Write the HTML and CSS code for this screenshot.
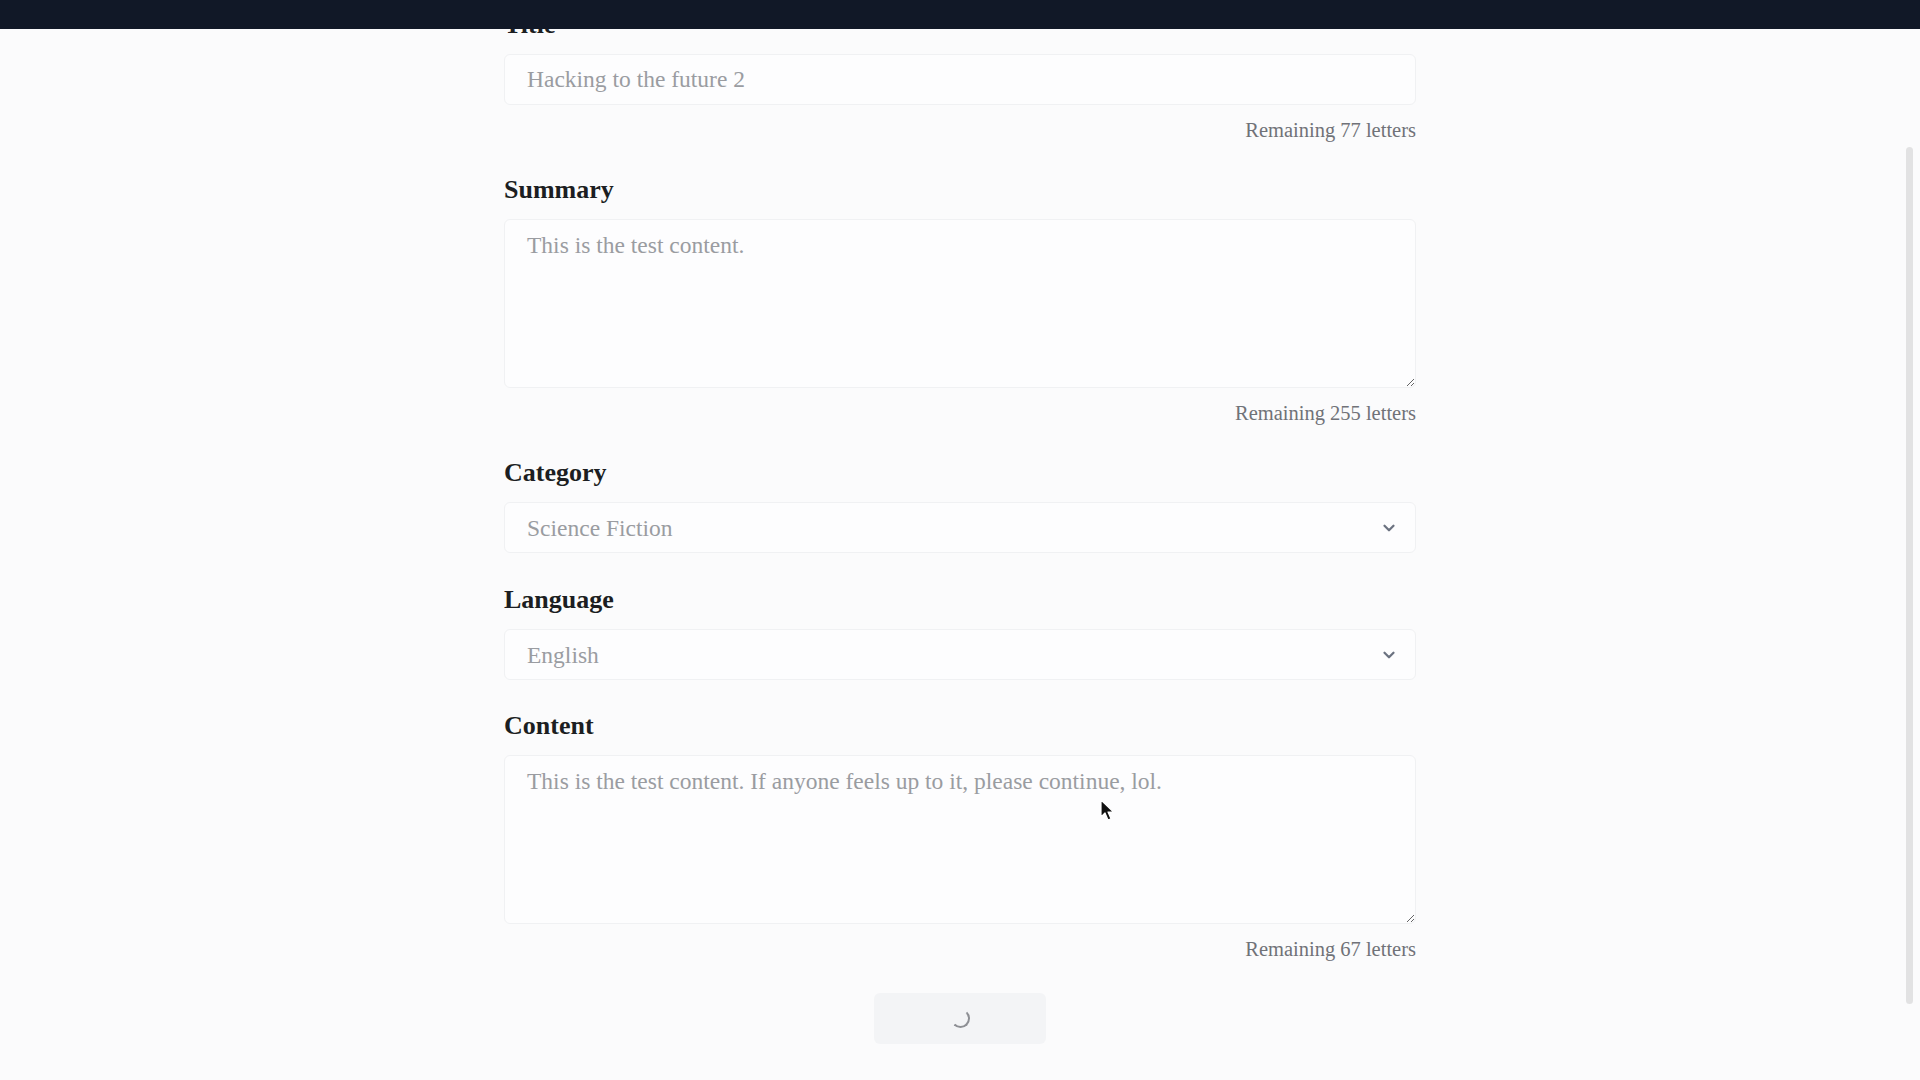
FILE: index.html
```html
<!DOCTYPE html>
<html>
<head>
  <title>Write a story</title>
  <link rel="stylesheet" href="styles.css">
</head>
<body>
  <header class="topbar"></header>

  <main class="page">
    <form class="post-form">
      <div class="field">
        <label for="title">Title</label>
        <input type="text" id="title" class="control" placeholder="Hacking to the future 2">
        <p class="counter">Remaining 77 letters</p>
      </div>

      <div class="field">
        <label for="summary">Summary</label>
        <textarea id="summary" class="control area" placeholder="This is the test content."></textarea>
        <p class="counter">Remaining 255 letters</p>
      </div>

      <div class="field wide-gap">
        <label for="category">Category</label>
        <div class="select-wrap">
          <select id="category" class="control select">
            <option>Science Fiction</option>
            <option>Fantasy</option>
            <option>Mystery</option>
          </select>
          <svg class="chevron" viewBox="0 0 24 24" width="18" height="18"><path d="M6 9l6 6 6-6" fill="none" stroke="#6b7280" stroke-width="3" stroke-linecap="round" stroke-linejoin="round"/></svg>
        </div>
      </div>

      <div class="field">
        <label for="language">Language</label>
        <div class="select-wrap">
          <select id="language" class="control select">
            <option>English</option>
            <option>Korean</option>
          </select>
          <svg class="chevron" viewBox="0 0 24 24" width="18" height="18"><path d="M6 9l6 6 6-6" fill="none" stroke="#6b7280" stroke-width="3" stroke-linecap="round" stroke-linejoin="round"/></svg>
        </div>
      </div>

      <div class="field">
        <label for="content">Content</label>
        <textarea id="content" class="control area" placeholder="This is the test content. If anyone feels up to it, please continue, lol."></textarea>
        <p class="counter">Remaining 67 letters</p>
      </div>

      <div class="actions">
        <button type="button" class="submit" disabled><span class="spinner"></span></button>
      </div>
    </form>
  </main>

  <div class="scroll-thumb"></div>

  <svg class="pointer" width="14" height="22" viewBox="0 0 14 22"><path d="M1 1v17l4-4 3 7 3-1.3-3-6.7h5.5z" fill="#111" stroke="#fff" stroke-width="1.2" stroke-linejoin="round"/></svg>
</body>
</html>
```

FILE: styles.css
```css
/* story editor form */
html, body {
  height: 100%;
}

body {
  margin: 0;
  overflow: hidden;
  background-color: #fbfbfc;
  font-family: "Liberation Serif", "Times New Roman", serif;
  color: #1f2328;
}

.topbar {
  position: fixed;
  top: 0;
  left: 0;
  right: 0;
  height: 29px;
  background-color: #111827;
  z-index: 5;
}

.page {
  padding-top: 9px;
}

.post-form {
  width: 912px;
  margin: 0 auto;
}

.field {
  margin-bottom: 30px;
}

.field.wide-gap {
  margin-bottom: 31px;
}

.field label {
  display: block;
  font-size: 26px;
  line-height: 32px;
  font-weight: bold;
  color: #1c1e22;
  margin-bottom: 13px;
}

.control {
  display: block;
  box-sizing: border-box;
  width: 100%;
  height: 51px;
  padding: 0 22px;
  border: 1px solid #f0f1f3;
  border-radius: 6px;
  background-color: #fdfdfe;
  font-family: "Liberation Serif", "Times New Roman", serif;
  font-size: 23.5px;
  color: #9a9ca1;
  outline: none;
}

.control::placeholder {
  color: #9a9ca1;
}

.area {
  height: 169px;
  padding: 10px 22px;
  line-height: 30px;
  resize: vertical;
}

.select-wrap {
  position: relative;
}

.select {
  appearance: none;
  -webkit-appearance: none;
}

.chevron {
  position: absolute;
  right: 18px;
  top: 17px;
  pointer-events: none;
}

.counter {
  margin: 11px 0 0;
  text-align: right;
  font-size: 20.5px;
  line-height: 28px;
  color: #707278;
}

.actions {
  display: flex;
  justify-content: center;
}

.submit {
  width: 172px;
  height: 51px;
  border: none;
  border-radius: 6px;
  background-color: #f3f4f6;
  display: flex;
  align-items: center;
  justify-content: center;
}

.spinner {
  display: block;
  width: 15px;
  height: 15px;
  border: 2.5px solid transparent;
  border-right-color: #8d8f94;
  border-bottom-color: #8d8f94;
  border-radius: 50%;
}

.scroll-thumb {
  position: fixed;
  right: 7px;
  top: 147px;
  width: 7px;
  height: 857px;
  border-radius: 4px;
  background-color: #e2e2e3;
}

.pointer {
  position: fixed;
  left: 1100px;
  top: 799px;
}
```
